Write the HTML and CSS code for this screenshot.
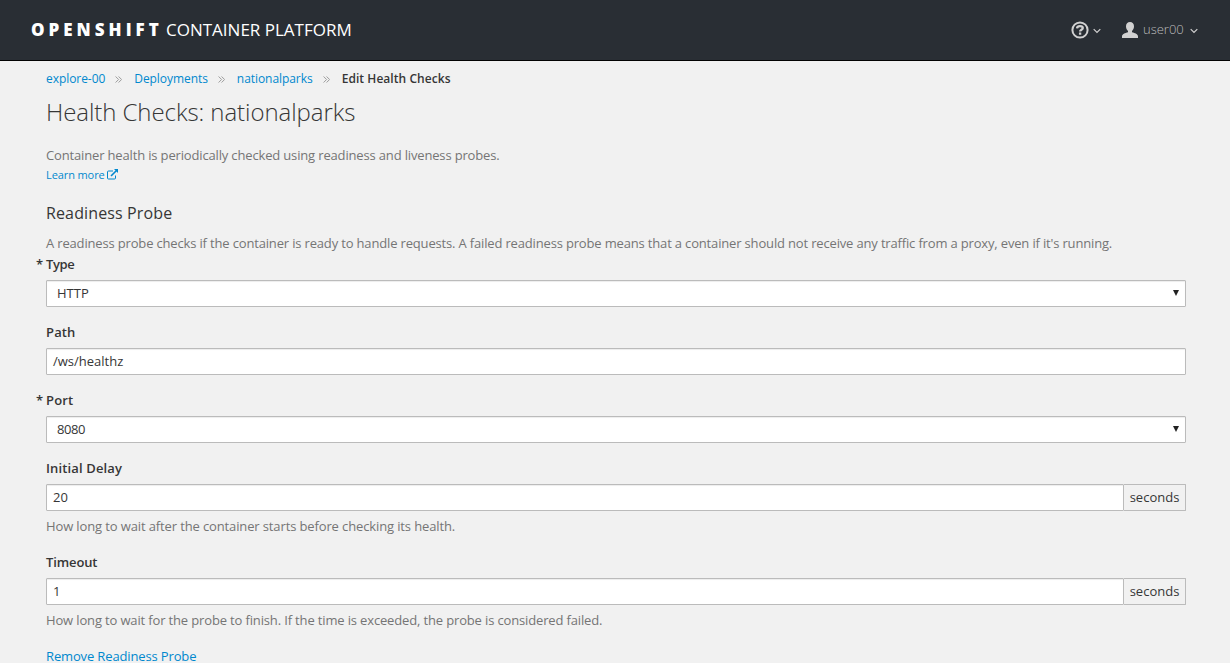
FILE: index.html
```html
<!DOCTYPE html>
<html lang="en">
<head>
<meta charset="utf-8">
<title>Edit Health Checks</title>
<link rel="stylesheet" href="styles.css">
</head>
<body>
<header class="navbar">
  <div class="brand"><span class="brand-bold">OPENSHIFT</span><span class="brand-light">CONTAINER PLATFORM</span></div>
  <nav class="tools">
    <a class="tool help"><svg class="icon-help" viewBox="0 0 18 18"><circle cx="9" cy="9" r="7.600" fill="none" stroke="currentColor" stroke-width="2"/><path d="M6 7.300C6.200 5.700 7.400 5.100 9 5.100c1.700 0 2.800.7 2.800 2 0 1.700-2.700 1.500-2.700 3.300M9.100 11.500v2.200" fill="none" stroke="currentColor" stroke-width="2.300"/></svg><svg class="chevron" viewBox="0 0 8 6"><path d="M.7 1.200 4 4.500 7.300 1.200" fill="none" stroke="currentColor" stroke-width="1.200"/></svg></a>
    <a class="tool user"><svg class="icon-user" viewBox="0 0 16 16"><path d="M8 0c2.500 0 4 1.700 4 4.300 0 2-.8 3.700-2 4.700v1.300c3 .9 6 1.800 6 4.200V16H0v-1.500c0-2.400 3-3.300 6-4.200V9C4.800 8 4 6.300 4 4.300 4 1.700 5.500 0 8 0z" fill="currentColor"/></svg><span class="user-name">user00</span><svg class="chevron" viewBox="0 0 8 6"><path d="M.7 1.200 4 4.500 7.300 1.200" fill="none" stroke="currentColor" stroke-width="1.200"/></svg></a>
  </nav>
</header>
<main class="content">
  <nav class="breadcrumb">
    <a>explore-00</a><svg class="sep" viewBox="0 0 7 7"><path d="M.6.5l3 3-3 3M3.600.5l3 3-3 3" fill="none" stroke="currentColor"/></svg><a>Deployments</a><svg class="sep" viewBox="0 0 7 7"><path d="M.6.5l3 3-3 3M3.600.5l3 3-3 3" fill="none" stroke="currentColor"/></svg><a>nationalparks</a><svg class="sep" viewBox="0 0 7 7"><path d="M.6.5l3 3-3 3M3.600.5l3 3-3 3" fill="none" stroke="currentColor"/></svg><strong>Edit Health Checks</strong>
  </nav>
  <h1 class="title">Health Checks: nationalparks</h1>
  <p class="intro">Container health is periodically checked using readiness and liveness probes.</p>
  <a class="learn">Learn more <svg class="external" viewBox="0 0 12 11"><path d="M6 2H1.500Q.5 2 .5 3v6q0 1 1 1h6q1 0 1-1V6.500" fill="none" stroke="currentColor"/><path d="M4 7 9.500 1.500" stroke="currentColor" stroke-width="1.600"/><path d="M7 0h4v4z" fill="currentColor"/></svg></a>
  <h2 class="section">Readiness Probe</h2>
  <p class="section-help">A readiness probe checks if the container is ready to handle requests. A failed readiness probe means that a container should not receive any traffic from a proxy, even if it's running.</p>
  <div class="field"><div class="label required type">Type</div><div class="control select"><span>HTTP</span><i class="arrow"></i></div></div>
  <div class="field"><div class="label">Path</div><div class="control">/ws/healthz</div></div>
  <div class="field"><div class="label required">Port</div><div class="control select"><span class="port">8080</span><i class="arrow"></i></div></div>
  <div class="field"><div class="label">Initial Delay</div><div class="group"><div class="control">20</div><span class="addon">seconds</span></div><p class="hint">How long to wait after the container starts before checking its health.</p></div>
  <div class="field"><div class="label timeout">Timeout</div><div class="group"><div class="control">1</div><span class="addon">seconds</span></div><p class="hint hint-long">How long to wait for the probe to finish. If the time is exceeded, the probe is considered failed.</p></div>
  <a class="remove">Remove Readiness Probe</a>
</main>
</body>
</html>
```
FILE: styles.css
```css
* { box-sizing: border-box; }
html, body { height: 100%; overflow: hidden; }
body { margin: 0; background: #f1f1f1; color: #363636; font: 13px/21px "Open Sans", sans-serif; }
h1, h2, p { margin: 0; }
a { color: #0088ce; }
.navbar { height: 61px; background: #292e34; border-bottom: 1px solid #030303; display: flex; justify-content: space-between; padding: 0 32px 0 31px; align-items: center; }
.brand { display: flex; gap: 5px; color: #fff; font-size: 17px; line-height: 24px; white-space: nowrap; }
.brand-bold { font-weight: 800; letter-spacing: 4px; width: 130px; }
.brand-light { letter-spacing: 0; }
.tools { display: flex; gap: 21px; }
.tool { display: flex; align-items: center; color: #d1d1d1; }
.icon-help { width: 18px; height: 18px; margin-right: 4px; }
.icon-user { width: 16px; height: 16px; margin-right: 5px; }
.user-name { color: #bdbdbd; width: 40px; margin-right: 7px; font-weight: 300; line-height: 19px; padding-bottom: 2px; }
.chevron { width: 8px; height: 6px; margin-top: 2px; }
.content { padding: 8px 44px 0 46px; }
.breadcrumb { display: flex; align-items: center; font-size: 12px; line-height: 20px; letter-spacing: -.06px; }
.breadcrumb strong { font-weight: 600; letter-spacing: .06px; }
.sep { width: 7px; height: 7px; color: #9c9c9c; margin: 1px 12px 0 10px; }
.title { font-size: 24px; line-height: 28px; font-weight: 300; margin-top: 9px; letter-spacing: -.07px; }
.intro { color: #757575; margin-top: 19px; letter-spacing: -.156px; }
.learn { display: block; font-size: 11px; line-height: 18px; letter-spacing: -.1px; }
.external { width: 12px; height: 11px; vertical-align: -1px; }
.section { font-size: 16px; line-height: 20px; font-weight: 400; margin-top: 19px; letter-spacing: .13px; }
.section-help { color: #757575; margin-top: 10px; white-space: nowrap; letter-spacing: -.163px; }
.field { margin-bottom: 15px; }
.label { position: relative; font-weight: 600; line-height: 21px; margin-bottom: 5px; letter-spacing: .14px; }
.type { letter-spacing: -.4px; }
.timeout { letter-spacing: -.12px; }
.required::before { content: "*"; position: absolute; left: -10px; }
.control { flex: 1; height: 27px; padding: 0 6px; line-height: 25px; border: 1px solid #bbb; border-radius: 1px; background: #fff; box-shadow: inset 0 1px 1px rgba(3, 3, 3, .075); }
.select { display: flex; justify-content: space-between; padding: 0 6px 0 10px; }
.port { letter-spacing: -.43px; }
.arrow { width: 6px; height: 6px; margin-top: 9px; background: #222; clip-path: polygon(0 0, 100% 0, 50% 100%); }
.group { display: flex; }
.addon { width: 62px; border: 1px solid #bbb; border-left: 0; line-height: 25px; text-align: center; border-radius: 0 1px 1px 0; }
.hint { color: #757575; margin-top: 5px; letter-spacing: -.125px; }
.hint-long { letter-spacing: -.148px; }
.remove { display: block; letter-spacing: -.14px; }
```
